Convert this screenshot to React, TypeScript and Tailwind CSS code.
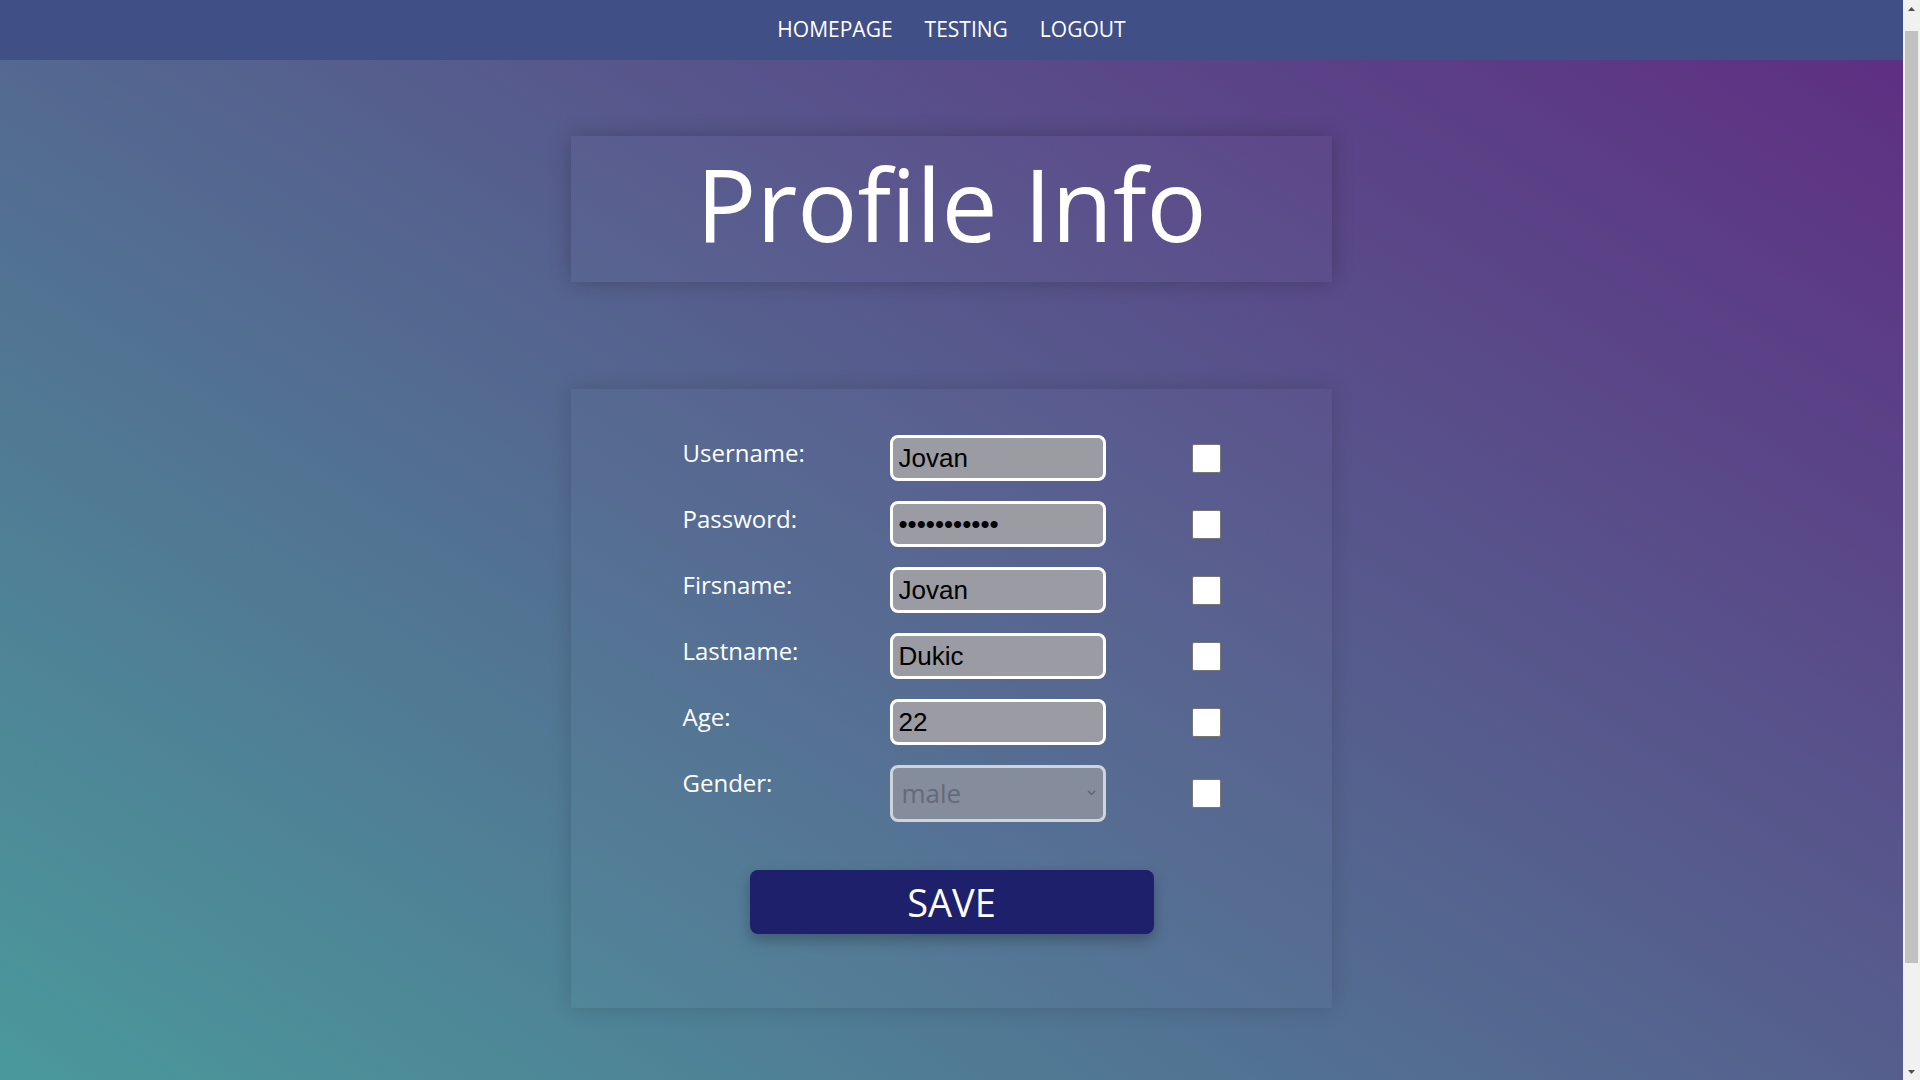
import { useState } from "react";

const fields = [
  { label: "Username:", value: "Jovan", type: "text" },
  { label: "Password:", value: "jovan123456", type: "password" },
  { label: "Firsname:", value: "Jovan", type: "text" },
  { label: "Lastname:", value: "Dukic", type: "text" },
  { label: "Age:", value: "22", type: "text" },
];

// the reference was captured with a classic scrollbar; draw one so the page keeps its 1903px width
const FakeScrollbar = () => (
  <div className="fixed top-0 right-0 flex h-screen w-[17px] flex-col bg-[#f1f1f1]">
    <div className="flex h-[17px] items-center justify-center">
      <svg className="h-[4px] w-[7px]" viewBox="0 0 7 4">
        <path d="M3.5 0L7 4H0z" fill="#505050" />
      </svg>
    </div>
    <div className="flex-1 px-[2px] pt-[14px] pb-[100px]">
      <div className="h-full bg-[#c1c1c1]" />
    </div>
    <div className="flex h-[17px] items-center justify-center">
      <svg className="h-[4px] w-[7px]" viewBox="0 0 7 4">
        <path d="M0 0h7L3.5 4z" fill="#505050" />
      </svg>
    </div>
  </div>
);

const ProfileInfo = () => {
  const [formData, setFormData] = useState(fields.map((f) => f.value));

  return (
    <div className="min-h-screen pr-[17px] font-['Open_Sans',sans-serif] text-white">
      <div className="bg-[linear-gradient(to_top_right,#49a09d,#5f2c82)] pb-[226px]">
        <header className="flex h-[60px] items-center justify-center gap-[32px] bg-[#414f87] text-[21px]">
          <a href="#" className="text-white">
            HOMEPAGE
          </a>
          <a href="#" className="text-white">
            TESTING
          </a>
          <a href="#" className="text-white">
            LOGOUT
          </a>
        </header>

        <div className="mx-auto mt-[76px] flex h-[146px] w-[40%] items-center justify-center bg-white/[0.02] pb-[12px] shadow-[0_0_20px_rgba(0,0,0,0.22)]">
          <h1 className="text-[100px] leading-none">Profile Info</h1>
        </div>

        <form
          onSubmit={(event) => event.preventDefault()}
          className="mx-auto mt-[107px] flex w-[40%] flex-col items-center bg-white/[0.02] pt-[46px] pb-[74px] shadow-[0_0_20px_rgba(0,0,0,0.15)]"
        >
          <div className="flex flex-col gap-[20px]">
            {fields.map((field, index) => (
              <div key={field.label} className="flex items-start">
                <span className="w-[207px] text-[24px]">{field.label}</span>
                <input
                  type={field.type}
                  value={formData[index]}
                  onChange={(event) =>
                    setFormData((current) =>
                      current.map((v, i) => (i === index ? event.target.value : v))
                    )
                  }
                  className="h-[46px] w-[216px] rounded-[8px] border-[3px] border-white bg-[#9a9ba3] px-[6px] font-['Liberation_Sans',Arial,sans-serif] text-[26px] text-black outline-none"
                />
                <div className="flex h-[46px] w-[115px] items-center justify-end">
                  <input
                    type="checkbox"
                    className="h-[29px] w-[29px] appearance-none rounded-[2px] border border-[#767676] bg-white"
                  />
                </div>
              </div>
            ))}

            <div className="flex items-start">
              <span className="w-[207px] text-[24px]">Gender:</span>
              <div className="relative h-[57px] w-[216px]">
                <select
                  disabled
                  defaultValue="male"
                  className="h-full w-full appearance-none rounded-[8px] border-[3px] border-[#cfd3dc] bg-[#858c9c] px-[9px] text-[26px] text-[#636a78] outline-none"
                >
                  <option value="male">male</option>
                  <option value="female">female</option>
                </select>
                <svg
                  className="pointer-events-none absolute right-[10px] top-[25px] h-[6px] w-[9px]"
                  viewBox="0 0 9 6"
                  fill="none"
                >
                  <path d="M1 1l3.5 3.5L8 1" stroke="#5f6574" strokeWidth="1.5" />
                </svg>
              </div>
              <div className="flex h-[57px] w-[115px] items-center justify-end">
                <input
                  type="checkbox"
                  className="h-[29px] w-[29px] appearance-none rounded-[2px] border border-[#767676] bg-white"
                />
              </div>
            </div>
          </div>

          <button
            type="submit"
            className="mt-[48px] h-[64px] w-[404px] rounded-[8px] bg-[#1e206c] text-[38px] leading-none text-white shadow-[0_6px_14px_rgba(0,0,0,0.25)]"
          >
            SAVE
          </button>
        </form>
      </div>
      <FakeScrollbar />
    </div>
  );
};

export default ProfileInfo;
